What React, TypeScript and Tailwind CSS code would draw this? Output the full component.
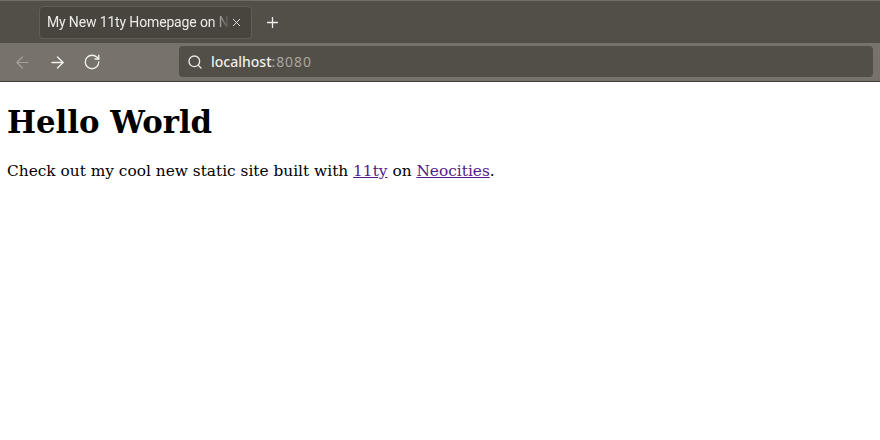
// Browser window showing the local 11ty homepage

import { ArrowLeft, ArrowRight, RotateCw, Search, X, Plus } from 'lucide-react'

export default function App() {
  return (
    <div className="flex h-[440px] w-[880px] flex-col overflow-hidden bg-white">
      {/* Tab strip */}
      <div className="flex h-[43px] items-center border-t border-[#716d66] bg-[#524e48] pl-[39px] font-['Roboto',sans-serif]">
        <div className="flex h-[33px] w-[213px] items-center rounded-[4px] border border-[#625e57] bg-[#48443e] pl-[7px]">
          <span className="w-[183px] overflow-hidden whitespace-nowrap text-[14px] tracking-[-0.15px] text-[#eeece8] [mask-image:linear-gradient(to_right,black_165px,transparent_183px)]">
            My New 11ty Homepage on Neocities
          </span>
          <X size={13} strokeWidth={1.7} className="text-[#e8e6e2]" />
        </div>
        <Plus size={17} strokeWidth={1.8} className="ml-[12px] text-[#f2f0ec]" />
      </div>

      {/* Nav toolbar */}
      <div className="flex h-[39px] items-center border-b border-[#3f3b35] bg-[#77726a] pl-[13px] pr-[7px]">
        <ArrowLeft size={19} strokeWidth={1.5} className="text-[#a5a199]" />
        <ArrowRight size={19} strokeWidth={1.7} className="ml-[16px] text-[#f4f2ee]" />
        <RotateCw size={18} strokeWidth={1.7} className="ml-[16px] text-[#f4f2ee]" />
        <div className="ml-[78px] mb-[1px] flex h-[31px] flex-1 items-center rounded-[4px] bg-[#524e48] pl-[8px] font-['Noto_Sans',sans-serif] text-[14px]">
          <Search size={16} strokeWidth={2} className="text-[#ece9e4]" />
          <span className="ml-[8px] font-medium text-[#f0eeea]">localhost</span>
          <span className="tracking-[0.9px] text-[#aaa69e]">:8080</span>
        </div>
      </div>

      {/* Page content */}
      <div className="px-[7px] font-['DejaVu_Serif',serif] text-black">
        <h1 className="mt-[21px] text-[30.75px] font-bold leading-[38px]">Hello World</h1>
        <p className="mt-[20px] text-[15.37px] leading-[20px]">
          Check out my cool new static site built with{' '}
          <a href="#" className="text-[#551a8b] underline">11ty</a> on{' '}
          <a href="#" className="text-[#551a8b] underline">Neocities</a>.
        </p>
      </div>
    </div>
  )
}
